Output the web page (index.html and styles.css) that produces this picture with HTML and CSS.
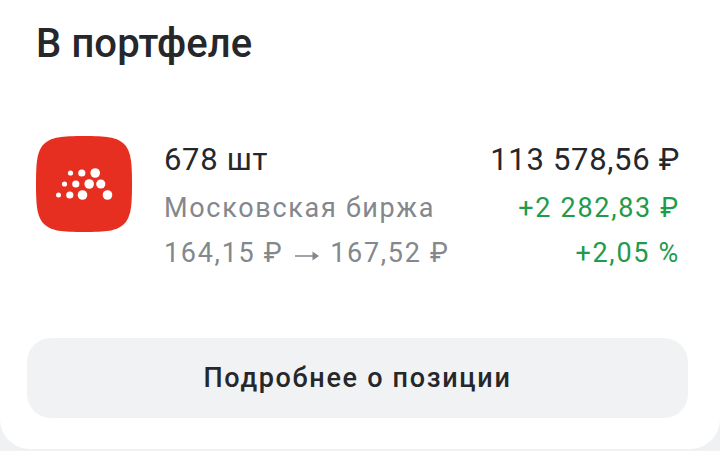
FILE: index.html
```html
<!DOCTYPE html>
<html lang="ru">
<head>
<meta charset="utf-8">
<title>В портфеле</title>
<link rel="stylesheet" href="styles.css">
</head>
<body>
<div class="card">
	<h2 class="title">В портфеле</h2>
	<div class="position">
		<svg class="logo" width="96" height="96" viewBox="0 0 96 96">
			<path fill="#e62f20" d="M48 0C70 0 81 1 88 8C95 15 96 26 96 48C96 70 95 81 88 88C81 95 70 96 48 96C26 96 15 95 8 88C1 81 0 70 0 48C0 26 1 15 8 8C15 1 26 0 48 0Z"/>
			<g fill="#fff">
				<circle cx="34.5" cy="37" r="2.6"/>
				<circle cx="45.8" cy="37" r="3.6"/>
				<circle cx="59.2" cy="37" r="4.8"/>
				<circle cx="28.5" cy="48" r="2.6"/>
				<circle cx="39.8" cy="48" r="3.6"/>
				<circle cx="53.2" cy="48" r="4.8"/>
				<circle cx="64.8" cy="48" r="4.6"/>
				<circle cx="22.5" cy="59" r="2.5"/>
				<circle cx="33.8" cy="59" r="3.6"/>
				<circle cx="46.5" cy="59" r="4.8"/>
				<circle cx="71.5" cy="59" r="4.8"/>
			</g>
		</svg>
		<div class="details">
			<div class="row row-top">
				<span class="main">678 шт</span>
				<span class="main">113 578,56 ₽</span>
			</div>
			<div class="row">
				<span class="muted">Московская биржа</span>
				<span class="gain">+2 282,83 ₽</span>
			</div>
			<div class="row">
				<span class="muted">164,15 ₽
					<svg class="arrow" width="24" height="12" viewBox="0 0 24 12"><path fill="#84878c" d="M0 5.2H17.5V1.5L24 6L17.5 10.5V6.8H0Z"/></svg>
					167,52 ₽</span>
				<span class="gain">+2,05 %</span>
			</div>
		</div>
	</div>
	<button class="more">Подробнее о позиции</button>
</div>
</body>
</html>
```

FILE: styles.css
```css
body {
	margin: 0;
	background-color: #f0f1f3;
	font-family: Roboto, "Liberation Sans", sans-serif;
	color: #25272b;
}
.card {
	box-sizing: border-box;
	height: 449px;
	padding: 20px 32px 0 27px;
	background-color: #fff;
	border-radius: 0 0 30px 30px;
}
.title {
	margin: 0 0 0 9px;
	font-size: 40px;
	line-height: 47px;
	font-weight: 500;
	letter-spacing: 0.1px;
}
.position {
	display: flex;
	margin: 69px 8px 0 9px;
}
.logo {
	flex: none;
	margin-right: 32px;
}
.details {
	flex: 1;
	margin-top: 1px;
	display: flex;
	flex-direction: column;
	gap: 1px;
}
.row {
	display: flex;
	justify-content: space-between;
	height: 44px;
	align-items: center;
}
.row-top {
	margin-bottom: 4px;
}
.main {
	font-size: 31px;
	letter-spacing: 0.7px;
}
.muted {
	font-size: 27px;
	letter-spacing: 1.7px;
	color: #84878c;
}
.gain {
	font-size: 27px;
	letter-spacing: 1.7px;
	color: #1f9b4b;
}
.arrow {
	margin: 0 3px;
}
.more {
	display: block;
	width: 661px;
	height: 80px;
	margin: 63px 0 0 0;
	padding: 0;
	border: 0;
	border-radius: 24px;
	background-color: #f1f2f4;
	font-family: inherit;
	font-size: 27px;
	font-weight: 500;
	letter-spacing: 1.7px;
	color: #25272b;
}
```
